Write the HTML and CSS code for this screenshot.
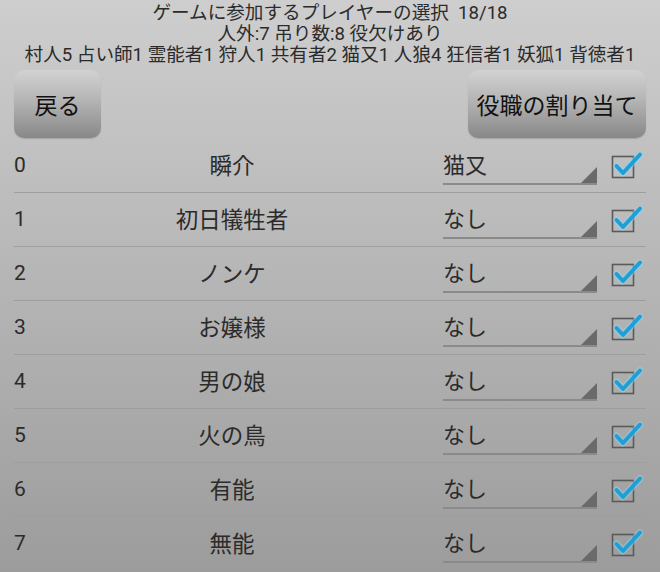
FILE: index.html
```html
<!DOCTYPE html>
<html lang="ja">
  <head>
    <meta charset="UTF-8" />
    <meta name="viewport" content="width=device-width, initial-scale=1.0" />
    <title>プレイヤーの選択</title>
    <link rel="stylesheet" href="styles.css">
  </head>
  <body>
    <div class="screen">
      <div class="summary">
        <p>ゲームに参加するプレイヤーの選択&nbsp; 18/18</p>
        <p>人外:7 吊り数:8 役欠けあり</p>
        <p>村人5 占い師1 霊能者1 狩人1 共有者2 猫又1 人狼4 狂信者1 妖狐1 背徳者1</p>
      </div>
      <div class="actions">
        <button class="btn">戻る</button>
        <button class="btn">役職の割り当て</button>
      </div>
      <div id="playerList" class="player-list"></div>
    </div>

    <script>
      const players = [
        { name: "瞬介", role: "猫又" },
        { name: "初日犠牲者", role: "なし" },
        { name: "ノンケ", role: "なし" },
        { name: "お嬢様", role: "なし" },
        { name: "男の娘", role: "なし" },
        { name: "火の鳥", role: "なし" },
        { name: "有能", role: "なし" },
        { name: "無能", role: "なし" },
      ];

      const checkSvg = `
        <svg class="check" width="34" height="30" viewBox="0 0 34 30">
          <rect x="3.5" y="5.5" width="21" height="21" fill="none" stroke="#5a5a5a" stroke-width="1.6"></rect>
          <polyline points="7.5 15 14 22 31 3.5" fill="none" stroke="#8fd6f2" stroke-width="7" stroke-linecap="round" stroke-linejoin="round" opacity="0.45"></polyline>
          <polyline points="7.5 15 14 22 31 3.5" fill="none" stroke="#1f9fd6" stroke-width="4" stroke-linecap="round" stroke-linejoin="round"></polyline>
        </svg>`;

      function renderPlayers() {
        const list = document.getElementById("playerList");
        list.innerHTML = "";
        players.forEach((player, index) => {
          const row = document.createElement("div");
          row.className = "player-row";
          row.innerHTML = `
            <span class="player-no">${index}</span>
            <span class="player-name">${player.name}</span>
            <span class="spinner">${player.role}</span>
            ${checkSvg}
          `;
          list.appendChild(row);
        });
      }

      renderPlayers();
    </script>
  </body>
</html>
```

FILE: styles.css
```css
html,
body {
  margin: 0;
  height: 100%;
}
body {
  font-family: Roboto, "Noto Sans CJK JP", sans-serif;
  color: #2b2b2b;
  background: linear-gradient(#cecece, #9c9c9c);
  overflow: hidden;
}
.screen {
  height: 572px;
}
.summary {
  text-align: center;
  font-size: 18.6px;
  line-height: 21px;
  padding-top: 3px;
}
.summary p {
  margin: 0;
  white-space: nowrap;
}
.actions {
  display: flex;
  justify-content: space-between;
  padding: 4px 14px 1px;
}
.btn {
  font-family: Roboto, "Noto Sans CJK JP", sans-serif;
  font-size: 23px;
  color: #111;
  height: 68px;
  padding: 0 4px;
  border: none;
  border-radius: 10px;
  background: linear-gradient(#d2d2d2, #b4b4b4 45%, #888888);
  box-shadow: 0 1px 1px rgba(0, 0, 0, 0.15);
}
.btn:first-child {
  width: 87px;
}
.btn:last-child {
  width: 178px;
}
.player-list {
  padding: 0 14px;
}
.player-row {
  display: grid;
  grid-template-columns: 60px 316px 154px 34px;
  align-items: center;
  height: 53px;
  border-bottom: 1px solid #9e9e9e;
  font-size: 22.5px;
}
.player-no {
  font-size: 21px;
  margin-top: -2px;
}
.player-name {
  text-align: center;
  margin-top: -3px;
}
.spinner {
  grid-column: 3;
  margin-left: 53px;
  width: 154px;
  height: 46px;
  box-sizing: border-box;
  padding-top: 8px;
  font-size: 22px;
  border-bottom: 2px solid #8a8a8a;
  position: relative;
  align-self: start;
}
.spinner::after {
  content: "";
  position: absolute;
  right: 0;
  bottom: 0;
  width: 0;
  height: 0;
  border-left: 16px solid transparent;
  border-bottom: 16px solid #6a6a6a;
}
.check {
  margin-left: 65px;
}
```
